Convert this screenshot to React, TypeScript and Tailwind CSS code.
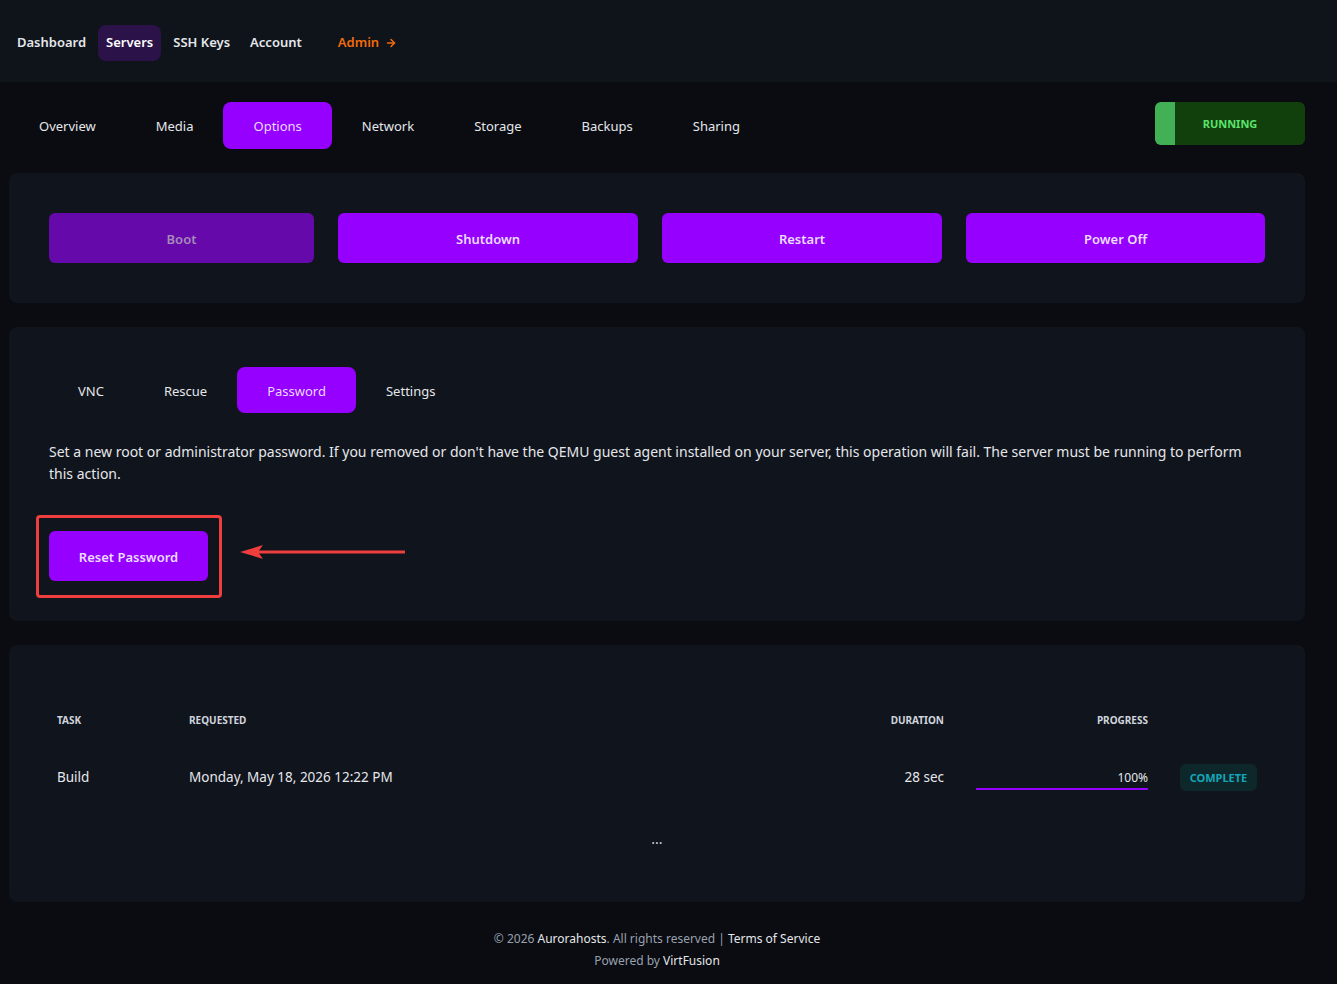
import { ArrowRight } from 'lucide-react';

const mainNav = ['Dashboard', 'Servers', 'SSH Keys', 'Account'];
const serverTabs = ['Overview', 'Media', 'Options', 'Network', 'Storage', 'Backups', 'Sharing'];
const optionTabs = ['VNC', 'Rescue', 'Password', 'Settings'];

const powerButtons = [
  { label: 'Boot', width: 'w-[265px]', disabled: true },
  { label: 'Shutdown', width: 'w-[300px]' },
  { label: 'Restart', width: 'w-[280px]' },
  { label: 'Power Off', width: 'w-[299px]' },
];

export default function App() {
  return (
    <div className="min-h-[984px] bg-[#0a0c11] font-['Noto_Sans',sans-serif] text-gray-200">
      {/* top header */}
      <header className="h-[82px] bg-[#0f131a] flex items-center pl-[9px] pt-[3px]">
        <nav className="flex items-center">
          {mainNav.map((item) => (
            <a
              key={item}
              className={`px-2 h-9 flex items-center rounded-lg text-[13px] font-semibold ${
                item === 'Servers' ? 'bg-[#2b1249] text-white mx-1' : 'text-gray-200'
              } ${item === 'Account' ? 'ml-1' : ''}`}
            >
              {item}
            </a>
          ))}
          <a className="ml-7 flex items-center gap-1.5 text-[13px] font-semibold text-[#f26b0f]">
            Admin
            <ArrowRight className="w-3 h-3" strokeWidth={3} />
          </a>
        </nav>
      </header>

      <main className="px-[9px] pr-[32px]">
        {/* server tabs + status */}
        <div className="flex items-start justify-between pt-5 pb-6">
          <div className="flex">
            {serverTabs.map((tab) => (
              <button
                key={tab}
                className={`h-[47px] px-[30px] pt-[2px] rounded-lg text-[13px] ${
                  tab === 'Options' ? 'bg-[#9500ff] text-[#ead9ff]' : 'text-gray-200'
                }`}
              >
                {tab}
              </button>
            ))}
          </div>
          <div className="relative w-[150px] h-[43px] rounded-md overflow-hidden flex items-center justify-center pt-[2px] bg-[#12400c]">
            <div className="absolute left-0 top-0 bottom-0 w-5 bg-[#42b156]" />
            <span className="text-[11px] font-bold text-[#5be36e]">RUNNING</span>
          </div>
        </div>

        {/* power actions */}
        <section className="bg-[#10141c] rounded-lg p-10 flex gap-6">
          {powerButtons.map((b) => (
            <button
              key={b.label}
              className={`${b.width} h-[50px] pt-[3px] rounded-md text-[13px] font-semibold ${
                b.disabled ? 'bg-[#6509aa] text-[#a58bbb]' : 'bg-[#9500ff] text-[#ecdcff]'
              }`}
            >
              {b.label}
            </button>
          ))}
        </section>

        {/* options panel */}
        <section className="mt-6 bg-[#10141c] rounded-lg pt-10 pb-10 pl-[39px] pr-10">
          <div className="flex">
            {optionTabs.map((tab) => (
              <button
                key={tab}
                className={`h-[46px] px-[30px] pt-[3px] rounded-lg text-[13px] ${
                  tab === 'Password' ? 'bg-[#9500ff] text-[#ead9ff]' : 'text-gray-200'
                }`}
              >
                {tab}
              </button>
            ))}
          </div>
          <p className="mt-[28px] pl-px text-[14px] leading-[22px] text-gray-200">
            Set a new root or administrator password. If you removed or don't have the QEMU guest agent
            installed on your server, this operation will fail. The server must be running to perform
            this action.
          </p>
          <div className="relative mt-[46px] pl-px flex items-center">
            <button className="w-[159px] h-[50px] pt-[3px] rounded-md bg-[#9500ff] text-[13px] font-semibold text-[#ecdcff]">
              Reset Password
            </button>
            {/* annotation */}
            <div className="absolute left-[-12px] top-[-16px] w-[186px] h-[83px] border-[3px] border-[#ef3e3e] rounded" />
            <svg className="absolute left-[191px] top-[13px]" width="168" height="16" viewBox="0 0 168 16">
              <line x1="14" y1="8" x2="166" y2="8" stroke="#ef3e3e" strokeWidth="3" />
              <path d="M1 8 L24 1 L19 8 L24 15 Z" fill="#ef3e3e" />
            </svg>
          </div>
        </section>

        {/* tasks */}
        <section className="mt-6 bg-[#10141c] rounded-lg pt-[68px] pb-[55px] pl-12 pr-12">
          <div className="flex items-center text-[10px] font-bold uppercase text-gray-300">
            <div className="w-[132px]">Task</div>
            <div className="flex-1">Requested</div>
            <div className="w-[120px] text-right">Duration</div>
            <div className="w-[172px] ml-8 text-right">Progress</div>
            <div className="w-[77px] ml-8" />
          </div>
          <div className="mt-[36px] flex items-center text-[13.5px] text-gray-200">
            <div className="w-[132px]">Build</div>
            <div className="flex-1">Monday, May 18, 2026 12:22 PM</div>
            <div className="w-[120px] text-right">28 sec</div>
            <div className="w-[172px] ml-8 pt-1">
              <div className="text-right text-xs leading-4">100%</div>
              <div className="h-[2px] bg-[#9500ff] mt-[2px]" />
            </div>
            <div className="w-[77px] ml-8 h-[27px] pt-[2px] rounded-md bg-[#0e272b] flex items-center justify-center text-[11px] font-bold text-[#14a6b8]">
              COMPLETE
            </div>
          </div>
          <div className="mt-[40px] text-center text-sm leading-4 text-gray-300">...</div>
        </section>

        <footer className="pt-[26px] pb-4 text-center text-[12px] leading-[22px] text-gray-400">
          <div>
            © 2026 <span className="text-gray-200">Aurorahosts</span>. All rights reserved |{' '}
            <span className="text-gray-200">Terms of Service</span>
          </div>
          <div>
            Powered by <span className="text-gray-200">VirtFusion</span>
          </div>
        </footer>
      </main>
    </div>
  );
}
